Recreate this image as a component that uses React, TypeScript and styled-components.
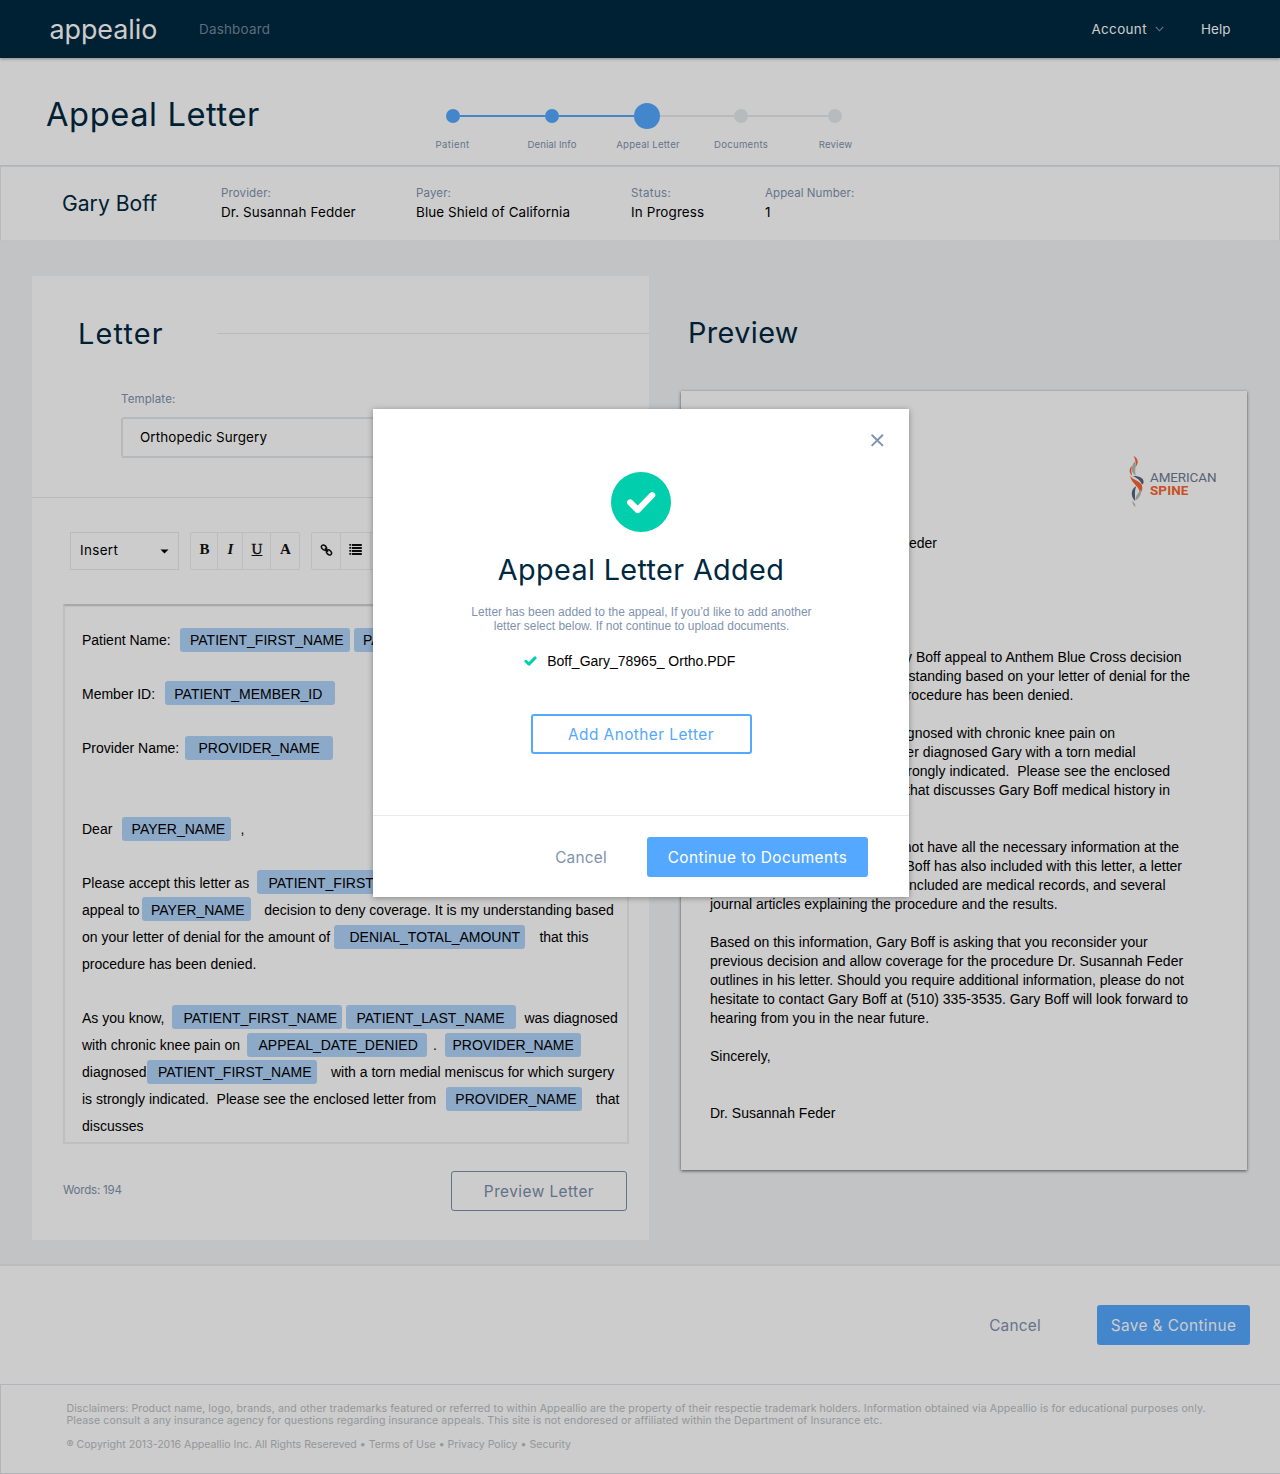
import React from "react";
import styled, { createGlobalStyle, css } from "styled-components";

const navy = "#002840";
const slate = "#8093ae";
const blue = "#54a8ff";
const line = "#e6eaee";
const ui = 'Inter, Roboto, sans-serif';
const body = '"Liberation Sans", Arial, sans-serif';

const Global = createGlobalStyle`
  *, *::before, *::after { box-sizing: border-box; }
  body { margin: 0; background: #fff; font-family: ${ui}; color: #000; }
  button { font: inherit; padding: 0; cursor: pointer; }
`;

const Page = styled.div`
  position: relative;
  width: 1280px;
  height: 1474px;
  overflow: hidden;
  display: flex;
  flex-direction: column;
`;

/* Interface text: size, tracking and colour vary by use */
const Label = styled.span<{ $size: number; $track?: number; $color?: string; $lh?: number; $drop?: number }>`
  display: block;
  white-space: pre;
  padding-top: ${(p) => p.$drop ?? 0}px;
  font-size: ${(p) => (p.$size * 0.96).toFixed(2)}px;
  letter-spacing: ${(p) => p.$track ?? 0}px;
  color: ${(p) => p.$color ?? "#000"};
  line-height: ${(p) => p.$lh ?? Math.round(p.$size * 1.2)}px;
`;

/* ---------- top bar ---------- */
const TopBar = styled.header`
  flex: none;
  height: 58px;
  padding: 0 49.5px 0 49.5px;
  display: flex;
  align-items: center;
  background: ${navy};
  box-shadow: 0 1px 3px rgba(0, 0, 0, 0.35);
  z-index: 1;
`;
const Brand = styled.div`
  width: 149.5px;
  padding-bottom: 1px;
`;
const AccountLink = styled.div`
  margin-left: auto;
  display: flex;
  align-items: center;
  gap: 8.5px;
  margin-right: 36.5px;
`;

/* ---------- title and progress ---------- */
const TitleBar = styled.section`
  flex: none;
  height: 108px;
  padding-left: 46px;
  display: flex;
  border-bottom: 1px solid #dae4ea;
`;
const PageTitle = styled.div`
  width: 400px;
  padding-top: 36px;
`;
const Progress = styled.div`
  padding-top: 45px;
`;
const Track = styled.div`
  display: flex;
  align-items: center;
  height: 26px;
`;
const Dot = styled.i<{ $done?: boolean; $current?: boolean }>`
  width: ${(p) => (p.$current ? 26 : 14)}px;
  height: ${(p) => (p.$current ? 26 : 14)}px;
  border-radius: 50%;
  background: ${(p) => (p.$done ? blue : line)};
`;
const Link = styled.i<{ $len: number; $done?: boolean }>`
  width: ${(p) => p.$len}px;
  height: 2px;
  background: ${(p) => (p.$done ? blue : line)};
`;
const StepNames = styled.div`
  margin: 10px 0 0 -42.5px;
  display: grid;
  grid-template-columns: 98px 101px 91px 95px 94px;
  justify-items: center;
`;

/* ---------- patient summary ---------- */
const Summary = styled.section`
  flex: none;
  height: 75px;
  padding: 17px 0 0 61px;
  display: grid;
  grid-template-columns: 159px 195px 215px 134px 1fr;
  border: 1px solid ${line};
  border-bottom-color: #f0f3f5;
`;
const PatientName = styled.div`
  padding-top: 7px;
`;

/* ---------- workspace ---------- */
const Workspace = styled.main`
  flex: none;
  height: 1025px;
  padding: 35px 33px 0 32px;
  display: flex;
  gap: 32px;
  background: #f3f4f6;
  border-bottom: 2px solid #ececec;
`;
const LetterPanel = styled.section`
  width: 617px;
  height: 964px;
  background: #fff;
`;
const PanelHead = styled.div`
  height: 113px;
  padding: 1px 0 0 46px;
  display: flex;
  align-items: center;
`;
const HeadRule = styled.i`
  flex: 1;
  height: 1px;
  background: ${line};
`;
const HeadTitle = styled.div`
  width: 139px;
`;
const TemplateField = styled.div`
  height: 109px;
  padding: 0 58px 0 89px;
  border-bottom: 1px solid ${line};
`;
const Select = styled.div`
  height: 41px;
  margin-top: 9px;
  padding-left: 17px;
  display: flex;
  align-items: center;
  border: 2px solid #e3e8ec;
  border-radius: 3px;
`;
const Toolbar = styled.div`
  display: flex;
  padding: 34px 0 0 38px;
`;
const InsertMenu = styled.div`
  width: 109px;
  height: 38px;
  margin-right: 11px;
  padding: 0 9px;
  display: flex;
  align-items: center;
  justify-content: space-between;
  border: 1px solid #e9e9eb;
`;
const InsertName = styled.div`
  padding-bottom: 2px;
`;
const ToolGroup = styled.div`
  height: 38px;
  margin-right: 11px;
  display: flex;
  border: 1px solid #ededed;
  border-radius: 2px;
`;
const Tool = styled.div<{ $w: number; $italic?: boolean; $under?: boolean }>`
  width: ${(p) => p.$w}px;
  padding: 0 0 3px 1px;
  display: flex;
  align-items: center;
  justify-content: center;
  color: #111;
  font: ${(p) => (p.$italic ? "italic " : "")}bold 15px "Liberation Serif", serif;
  ${(p) => p.$under && css`text-decoration: underline; font-weight: normal; -webkit-text-stroke: 0.4px #111;`}
  & + & { border-left: 1px solid #ededed; }
`;
const Editor = styled.div`
  width: 566px;
  height: 540px;
  margin: 34px 0 0 31px;
  padding: 20.5px 0 0 17px;
  border: 2px solid #efefef;
  border-top-color: #d2d2d2;
  box-shadow: inset 0 1px 1px #f2f2f2;
`;
const Row = styled.div`
  height: 27px;
  display: flex;
  align-items: center;
  font: 14px/27px ${body};
  white-space: pre;
`;
const Words = styled.span<{ $w?: number }>`
  flex: none;
  ${(p) => p.$w !== undefined && css`width: ${p.$w}px;`}
`;
const Chip = styled.span<{ $w: number; $pad: number; $gap: number; $raised: boolean }>`
  flex: none;
  width: ${(p) => p.$w}px;
  height: 24px;
  padding-left: ${(p) => p.$pad}px;
  margin-right: ${(p) => p.$gap}px;
  margin-bottom: ${(p) => (p.$raised ? 2 : 0)}px;
  line-height: ${(p) => (p.$raised ? 26 : 24)}px;
  background: #b1d4fa;
  border-radius: 3px;
`;
const PanelFoot = styled.div`
  padding: 27px 22px 0 31px;
  display: flex;
  justify-content: space-between;
`;

const Button = styled.button<{ $w: number; $kind: "solid" | "outline" | "quiet" }>`
  width: ${(p) => p.$w}px;
  height: 40px;
  display: flex;
  align-items: center;
  justify-content: center;
  border-radius: 3px;
  background: ${(p) => (p.$kind === "solid" ? blue : "transparent")};
  border: ${(p) =>
    p.$kind === "solid" ? "0" : p.$kind === "outline" ? `2px solid ${blue}` : "1px solid #7b8fab"};
`;

/* ---------- preview ---------- */
const PreviewColumn = styled.section`
  width: 566px;
  display: flex;
  flex-direction: column;
`;
const PreviewTitle = styled.div`
  height: 115px;
  padding: 39px 0 0 7px;
`;
const Paper = styled.article`
  height: 779px;
  padding: 64px 29px 0;
  background: #fff;
  box-shadow: 0 1px 3px rgba(0, 0, 0, 0.6);
`;
const ClinicLogo = styled.div`
  height: 79px;
  margin-right: 1px;
  display: flex;
  justify-content: flex-end;
`;
const ClinicName = styled.div`
  width: 67px;
  padding: 16px 0 0 0;
  margin-left: 5px;
  font-family: Roboto, sans-serif;
`;
const PaperLine = styled.div<{ $w?: number }>`
  height: 19px;
  font: 14px/19px ${body};
  letter-spacing: 0.01px;
  white-space: pre;
  ${(p) => p.$w && css`width: ${p.$w}px; display: flex; justify-content: flex-end;`}
`;

/* ---------- bottom ---------- */
const Actions = styled.section`
  flex: none;
  height: 118px;
  padding-right: 30px;
  display: flex;
  align-items: center;
  justify-content: flex-end;
  gap: 56px;
`;
const Footer = styled.footer`
  flex: none;
  height: 90px;
  padding: 18px 0 0 65.5px;
  border: 1px solid #dfe1e3;
  border-top-color: #dae4ea;
  border-right: 0;
`;

/* ---------- dialog ---------- */
const Overlay = styled.div`
  position: absolute;
  inset: 0;
  z-index: 2;
  padding: 409px 0 0 2px;
  display: flex;
  align-items: flex-start;
  justify-content: center;
  background: rgba(0, 0, 0, 0.2);
`;
const Dialog = styled.div`
  width: 536px;
  height: 488px;
  background: #fff;
  box-shadow: 0 1px 6px rgba(0, 0, 0, 0.35);
`;
const DialogBody = styled.div`
  height: 407px;
  display: flex;
  flex-direction: column;
  align-items: center;
  border-bottom: 1px solid #e8ebed;
`;
const CloseRow = styled.div`
  align-self: stretch;
  height: 63px;
  padding: 24px 25px 0 0;
  display: flex;
  justify-content: flex-end;
  align-items: flex-start;
`;
const DialogTitle = styled.div`
  margin-top: 20px;
`;
const Note = styled.p`
  margin: 17px 0 0;
  padding-left: 1px;
  font: 12px/14px ${body};
  color: ${slate};
  text-align: center;
  white-space: pre;
`;
const FileRow = styled.div`
  margin: 19px 0 44px;
  padding-right: 22.5px;
  display: flex;
  align-items: center;
  gap: 10px;
  font: 14px/18px ${body};
`;
const DialogFoot = styled.div`
  height: 81px;
  padding-right: 41px;
  display: flex;
  align-items: center;
  justify-content: flex-end;
  gap: 40px;
`;

type ChipPart = { chip: string; w: number; pad: number; gap: number; raised: boolean };
type Part = string | [string, number] | ChipPart;
const chip = (name: string, w: number, pad: number, gap = 0, raised = false): Part => ({ chip: name, w, pad, gap, raised });

const rows: Part[][] = [
  [["Patient Name:", 98], chip("PATIENT_FIRST_NAME", 170, 10, 4), chip("PATIENT_LAST_NAME", 170, 9)],
  [],
  [["Member ID:", 83], chip("PATIENT_MEMBER_ID", 170, 9.3, 0, true)],
  [],
  [["Provider Name:", 103], chip("PROVIDER_NAME", 148, 13.5)],
  [],
  [],
  [["Dear", 40], chip("PAYER_NAME", 109, 9.6, 9.5), ","],
  [],
  [["Please accept this letter as", 175], chip("PATIENT_FIRST_NAME", 170, 11.5, 0, true)],
  [["appeal to", 60], chip("PAYER_NAME", 109, 9, 13.3, true), "decision to deny coverage. It is my understanding based"],
  [["on your letter of denial for the amount of", 252], chip("DENIAL_TOTAL_AMOUNT", 191, 15.5, 14.4), "that this"],
  ["procedure has been denied."],
  [],
  [["As you know,", 90], chip("PATIENT_FIRST_NAME", 170, 11.5, 4, true), chip("PATIENT_LAST_NAME", 170, 10.5, 8.4, true), "was diagnosed"],
  [["with chronic knee pain on", 165], chip("APPEAL_DATE_DENIED", 180, 11.5, 6), [".", 12], chip("PROVIDER_NAME", 136, 7.5)],
  [["diagnosed", 65], chip("PATIENT_FIRST_NAME", 170, 11, 14), "with a torn medial meniscus for which surgery"],
  [["is strongly indicated.  Please see the enclosed letter from", 364], chip("PROVIDER_NAME", 136, 9.3, 14), "that"],
  ["discusses"],
];

const paper: [string, number?][] = [
  ["Dr. Susannah Feder", 227],
  [""], [""], [""], [""], [""],
  ["Gary Boff appeal to Anthem Blue Cross decision", 471.5],
  ["my understanding based on your letter of denial for the", 480],
  ["that this procedure has been denied.", 363.5],
  [""],
  ["was diagnosed with chronic knee pain on", 405],
  ["Dr. Susannah Feder diagnosed Gary with a torn medial", 425.5],
  ["surgery is strongly indicated.  Please see the enclosed", 460],
  ["that discusses Gary Boff medical history in", 460],
  [""],
  [""],
  ["not have all the necessary information at the", 469],
  ["Boff has also included with this letter, a letter", 472],
  ["Included are medical records, and several", 455.5],
  ["journal articles explaining the procedure and the results."],
  [""],
  ["Based on this information, Gary Boff is asking that you reconsider your"],
  ["previous decision and allow coverage for the procedure Dr. Susannah Feder"],
  ["outlines in his letter. Should you require additional information, please do not"],
  ["hesitate to contact Gary Boff at (510) 335-3535. Gary Boff will look forward to"],
  ["hearing from you in the near future."],
  [""],
  ["Sincerely,"],
  [""], [""],
  ["Dr. Susannah Feder"],
];

const facts: [string, number, string, number][] = [
  ["Provider:", 0.134, "Dr. Susannah Fedder", 0.12],
  ["Payer:", 0.134, "Blue Shield of California", 0.088],
  ["Status:", 0.36, "In Progress", 0.12],
  ["Appeal Number:", 0.07, "1", 0],
];

const EditorPart = ({ part }: { part: Part }) => {
  if (typeof part === "string") return <Words>{part}</Words>;
  if (Array.isArray(part)) return <Words $w={part[1]}>{part[0]}</Words>;
  return <Chip $w={part.w} $pad={part.pad} $gap={part.gap} $raised={part.raised}>{part.chip}</Chip>;
};

const SpineMark = () => (
  <svg width="17.3" height="52.7" viewBox="84 44 52 158">
    <path d="M101 47C113 53 119 67 106 81C109 68 106 57 101 47Z" fill="#fa6430" />
    <path d="M104 63C112 78 101 88 108 106C92 96 91 80 104 63Z" fill="#babcb4" />
    <path d="M96 77C87 84 86 98 97 107C93 96 93 87 96 77Z" fill="#fa6430" />
    <path d="M98 107C118 106 132 113 131 126C131 129 129 131 126 133C121 119 111 113 98 107Z" fill="#56677f" />
    <path d="M90 106C98 120 128 122 127 142C127 150 124 156 119 161C122 138 96 134 90 106Z" fill="#fa6430" />
    <path d="M109 138C93 145 91 166 104 182C107 168 102 153 109 138Z" fill="#56677f" />
    <path d="M122 146C119 158 106 163 106 181C120 172 126 160 122 146Z" fill="#babcb4" />
    <path d="M98 180C99 188 107 188 106 200C99 194 96 188 98 180Z" fill="#babcb4" />
  </svg>
);

export default function App() {
  return (
    <Page>
      <Global />
      <TopBar>
        <Brand><Label $size={28} $track={-0.05} $color="#fff">appealio</Label></Brand>
        <Label $size={14} $track={0.2} $color="#76899b">Dashboard</Label>
        <AccountLink>
          <Label $size={14} $track={0.37} $color="#fff">Account</Label>
          <svg width="9" height="6" viewBox="0 0 9 6" fill="none" stroke="#8093ae" strokeWidth="1.1"><path d="M.8 .8L4.5 4.8L8.2 .8" /></svg>
        </AccountLink>
        <Label $size={14} $track={0.06} $color="#fff">Help</Label>
      </TopBar>

      <TitleBar>
        <PageTitle><Label $size={34} $track={0.6} $color={navy}>Appeal Letter</Label></PageTitle>
        <Progress>
          <Track>
            <Dot $done /><Link $len={85} $done />
            <Dot $done /><Link $len={75} $done />
            <Dot $done $current /><Link $len={74} />
            <Dot /><Link $len={80} />
            <Dot />
          </Track>
          <StepNames>
            <Label $size={10} $track={0.4} $lh={12} $color={slate}>Patient</Label>
            <Label $size={10} $track={0.08} $lh={12} $color={slate}>Denial Info</Label>
            <Label $size={10} $track={0.23} $lh={12} $color={slate}>Appeal Letter</Label>
            <Label $size={10} $track={0.28} $lh={12} $color={slate}>Documents</Label>
            <Label $size={10} $track={0.2} $lh={12} $color={slate}>Review</Label>
          </StepNames>
        </Progress>
      </TitleBar>

      <Summary>
        <PatientName><Label $size={22} $track={0.01} $color={navy}>Gary Boff</Label></PatientName>
        {facts.map(([name, t1, value, t2]) => (
          <div key={name}>
            <Label $size={12} $track={t1} $lh={19} $color={slate}>{name}</Label>
            <Label $size={14} $track={t2} $lh={19}>{value}</Label>
          </div>
        ))}
      </Summary>

      <Workspace>
        <LetterPanel>
          <PanelHead>
            <HeadTitle><Label $size={30} $track={1.2} $color={navy} $drop={1}>Letter</Label></HeadTitle>
            <HeadRule />
          </PanelHead>
          <TemplateField>
            <Label $size={12} $track={0.12} $lh={18} $drop={1} $color={slate}>Template:</Label>
            <Select><Label $size={14} $track={0.1}>Orthopedic Surgery</Label></Select>
          </TemplateField>
          <Toolbar>
            <InsertMenu>
              <InsertName><Label $size={14} $track={0.34} $lh={18}>Insert</Label></InsertName>
              <svg width="9" height="5" viewBox="0 0 9 5"><path d="M.5 .4H8.5L4.5 4.5Z" /></svg>
            </InsertMenu>
            <ToolGroup>
              <Tool $w={26}>B</Tool>
              <Tool $w={25} $italic>I</Tool>
              <Tool $w={28} $under>U</Tool>
              <Tool $w={29}>A</Tool>
            </ToolGroup>
            <ToolGroup>
              <Tool $w={28}>
                <svg width="13" height="12" viewBox="0 0 13 12" fill="none" stroke="#111" strokeWidth="1.5">
                  <ellipse cx="4" cy="3.6" rx="2.9" ry="2.1" transform="rotate(45 4 3.6)" />
                  <ellipse cx="9" cy="8.4" rx="2.9" ry="2.1" transform="rotate(45 9 8.4)" />
                  <path d="M4.8 4.4L8.2 7.6" />
                </svg>
              </Tool>
              <Tool $w={30}>
                <svg width="14" height="11" viewBox="0 0 14 11" fill="#111">
                  {[0, 3, 6, 9].map((y) => (
                    <g key={y}><rect x="0.3" y={y} width="1.7" height="1.7" /><rect x="2.8" y={y} width="10" height="2" /></g>
                  ))}
                </svg>
              </Tool>
              <Tool $w={30} />
            </ToolGroup>
          </Toolbar>
          <Editor>
            {rows.map((parts, i) => (
              <Row key={i}>{parts.map((part, j) => <EditorPart key={j} part={part} />)}</Row>
            ))}
          </Editor>
          <PanelFoot>
            <Label $size={12} $track={-0.21} $lh={38} $color={slate}>Words: 194</Label>
            <Button $w={176} $kind="quiet"><Label $size={16} $track={0.46} $drop={1} $color="#7b8fab">Preview Letter</Label></Button>
          </PanelFoot>
        </LetterPanel>

        <PreviewColumn>
          <PreviewTitle><Label $size={30} $track={0.4} $color={navy}>Preview</Label></PreviewTitle>
          <Paper>
            <ClinicLogo>
              <SpineMark />
              <ClinicName>
                <Label $size={14} $track={-0.1} $lh={13} $color="#6d7c91">AMERICAN</Label>
                <Label as="b" $size={14} $track={0.1} $lh={13} $color="#fa6430">SPINE</Label>
              </ClinicName>
            </ClinicLogo>
            {paper.map(([text, w], i) => <PaperLine key={i} $w={w}>{text}</PaperLine>)}
          </Paper>
        </PreviewColumn>
      </Workspace>

      <Actions>
        <Label $size={16} $track={0.25} $drop={1} $color={slate}>Cancel</Label>
        <Button $w={153} $kind="solid"><Label $size={16} $track={0.42} $drop={1} $color="#fff">Save &amp; Continue</Label></Button>
      </Actions>

      <Footer>
        <Label $size={11} $track={0.095} $lh={12} $color="#babdbf">Disclaimers: Product name, logo, brands, and other trademarks featured or referred to within Appeallio are the property of their respectie trademark holders. Information obtained via Appeallio is for educational purposes only.</Label>
        <Label $size={11} $track={0.098} $lh={12} $color="#babdbf">Please consult a any insurance agency for questions regarding insurance appeals. This site is not endoresed or affiliated within the Department of Insurance etc.</Label>
        <Label $size={11} $track={0.013} $lh={36} $color="#babdbf">® Copyright 2013-2016 Appeallio Inc. All Rights Resereved • Terms of Use • Privacy Policy • Security</Label>
      </Footer>

      <Overlay>
        <Dialog>
          <DialogBody>
            <CloseRow>
              <svg width="14" height="14" viewBox="0 0 14 14" stroke={slate} strokeWidth="2" strokeLinecap="round">
                <path d="M2.2 2.2L12.4 12.4M12.4 2.2L2.2 12.4" />
              </svg>
            </CloseRow>
            <svg width="60" height="60" viewBox="0 0 60 60" fill="none">
              <circle cx="30" cy="30" r="30" fill="#00ceac" />
              <path d="M19.2 30.5L26.7 38L41.2 23.2" stroke="#fff" strokeWidth="6.2" strokeLinecap="round" strokeLinejoin="round" />
            </svg>
            <DialogTitle><Label $size={30} $track={0.36} $color={navy}>Appeal Letter Added</Label></DialogTitle>
            <Note>{"Letter has been added to the appeal, If you’d like to add another\nletter select below. If not continue to upload documents."}</Note>
            <FileRow>
              <svg width="13" height="10" viewBox="0 0 13 10" fill="none" stroke="#00ceac" strokeWidth="2.9" strokeLinecap="round" strokeLinejoin="round">
                <path d="M1.9 5.3L4.9 8.1L11.1 1.9" />
              </svg>
              Boff_Gary_78965_ Ortho.PDF
            </FileRow>
            <Button $w={221} $kind="outline"><Label $size={16} $track={0.46} $drop={1} $color={blue}>Add Another Letter</Label></Button>
          </DialogBody>
          <DialogFoot>
            <Label $size={16} $track={0.25} $drop={1} $color={slate}>Cancel</Label>
            <Button $w={221} $kind="solid"><Label $size={16} $track={0.42} $drop={1} $color="#fff">Continue to Documents</Label></Button>
          </DialogFoot>
        </Dialog>
      </Overlay>
    </Page>
  );
}
